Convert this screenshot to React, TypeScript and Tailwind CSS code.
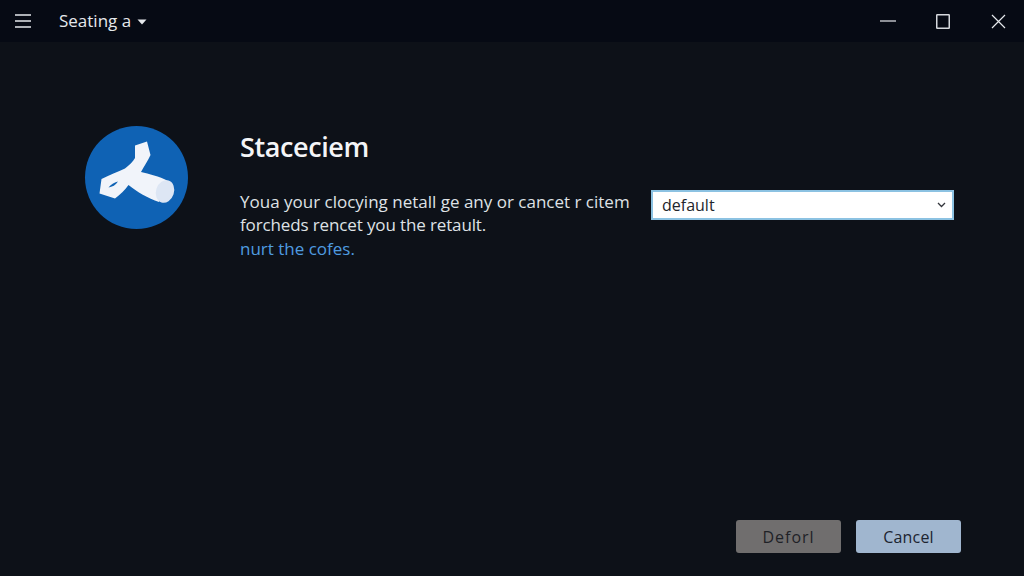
export default function App() {
  return (
    <div className="flex h-[576px] w-[1024px] flex-col overflow-hidden bg-[#0d1118] font-['Open_Sans',sans-serif] text-white">
      <header className="flex h-[42px] items-center bg-[#060a14]">
        <div className="flex items-center pl-[15px]">
          <svg width="17" height="14" viewBox="0 0 17 14" className="text-[#e5e7eb]">
            <path d="M0 1h16M0 7h16M0 13h16" stroke="currentColor" strokeWidth="1.6" fill="none" />
          </svg>
          <span className="ml-[27px] text-[17px] leading-6 text-[#e5e8ec]">Seating a</span>
          <svg width="10" height="6" viewBox="0 0 10 6" className="ml-[6px] mt-px">
            <path d="M0.5 0.5h9L5 5.5z" fill="#e5e8ec" />
          </svg>
        </div>
        <div className="ml-auto flex items-center pr-[18px]">
          <svg width="16" height="2" viewBox="0 0 16 2">
            <path d="M0 1h16" stroke="#d5d8dd" strokeWidth="1.3" />
          </svg>
          <svg width="14" height="15" viewBox="0 0 14 15" className="ml-[40px]">
            <rect x="0.75" y="0.75" width="12.5" height="13.5" rx="0.5" stroke="#d5d8dd" strokeWidth="1.5" fill="none" />
          </svg>
          <svg width="15" height="15" viewBox="0 0 15 15" className="ml-[41px]">
            <path d="M1 1l13 13M14 1L1 14" stroke="#e5e8ec" strokeWidth="1.2" fill="none" />
          </svg>
        </div>
      </header>

      <main className="flex flex-1 flex-col justify-between pb-[23px] pl-[85px] pr-[63px] pt-[84px]">
        <div className="flex items-start">
          <div className="h-[103px] w-[103px] shrink-0 rounded-full bg-[#0f62b4]">
            <svg width="103" height="103" viewBox="0 0 103 103">
              <path
                d="M50 19.5L62 15.5L65.5 29C63 35 59 40 56 46C64 48 74 50 83 55L74 76C63 72 52 66 43.5 59C40 64 35 69 30 72.5L14.5 67.5L16.5 53C24 49 33 46 40 42.5C44 39 48 36 50 32Z"
                fill="#f1f4fa"
              />
              <ellipse cx="80" cy="65.5" rx="9" ry="11.5" transform="rotate(18 80 65.5)" fill="#dde6f4" />
              <path d="M23.5 61.5C26 58 30 56 33 55.5C31 59 27 61 23.5 61.5Z" fill="#0f62b4" />
            </svg>
          </div>
          <div className="ml-[52px] w-[400px] shrink-0 pt-[1px]">
            <h1 className="text-[27px] font-semibold leading-[40px] tracking-[-0.4px] text-[#f4f5f7]">Staceciem</h1>
            <p className="mt-[23px] whitespace-nowrap text-[17px] leading-[23.4px] text-[#dfe2e6]">
              Youa your clocying netall ge any or cancet r citem
              <br />
              <span className="tracking-[-0.13px]">forcheds rencet you the retault.</span>
              <br />
              <span className="text-[#4f9ce0]">nurt the cofes.</span>
            </p>
          </div>
          <div className="ml-[11px] mt-[64px] flex h-[30px] w-[303px] shrink-0 items-center justify-between border-2 border-[#8cc2e2] bg-white pl-[9px] pr-[6px] text-[16px] text-[#22252b]">
            <span>default</span>
            <svg width="9" height="6" viewBox="0 0 9 6">
              <path d="M1 1l3.5 3.5L8 1" stroke="#33363c" strokeWidth="1.3" fill="none" />
            </svg>
          </div>
        </div>

        <div className="flex justify-end gap-[15px]">
          <button className="h-[33px] w-[105px] rounded-[3px] bg-[#706e6e] text-[16px] tracking-[1px] text-[#1f2227]">Deforl</button>
          <button className="h-[33px] w-[105px] rounded-[3px] bg-[#a0b6cf] text-[16px] tracking-[0.2px] text-[#1c2430]">Cancel</button>
        </div>
      </main>
    </div>
  );
}
